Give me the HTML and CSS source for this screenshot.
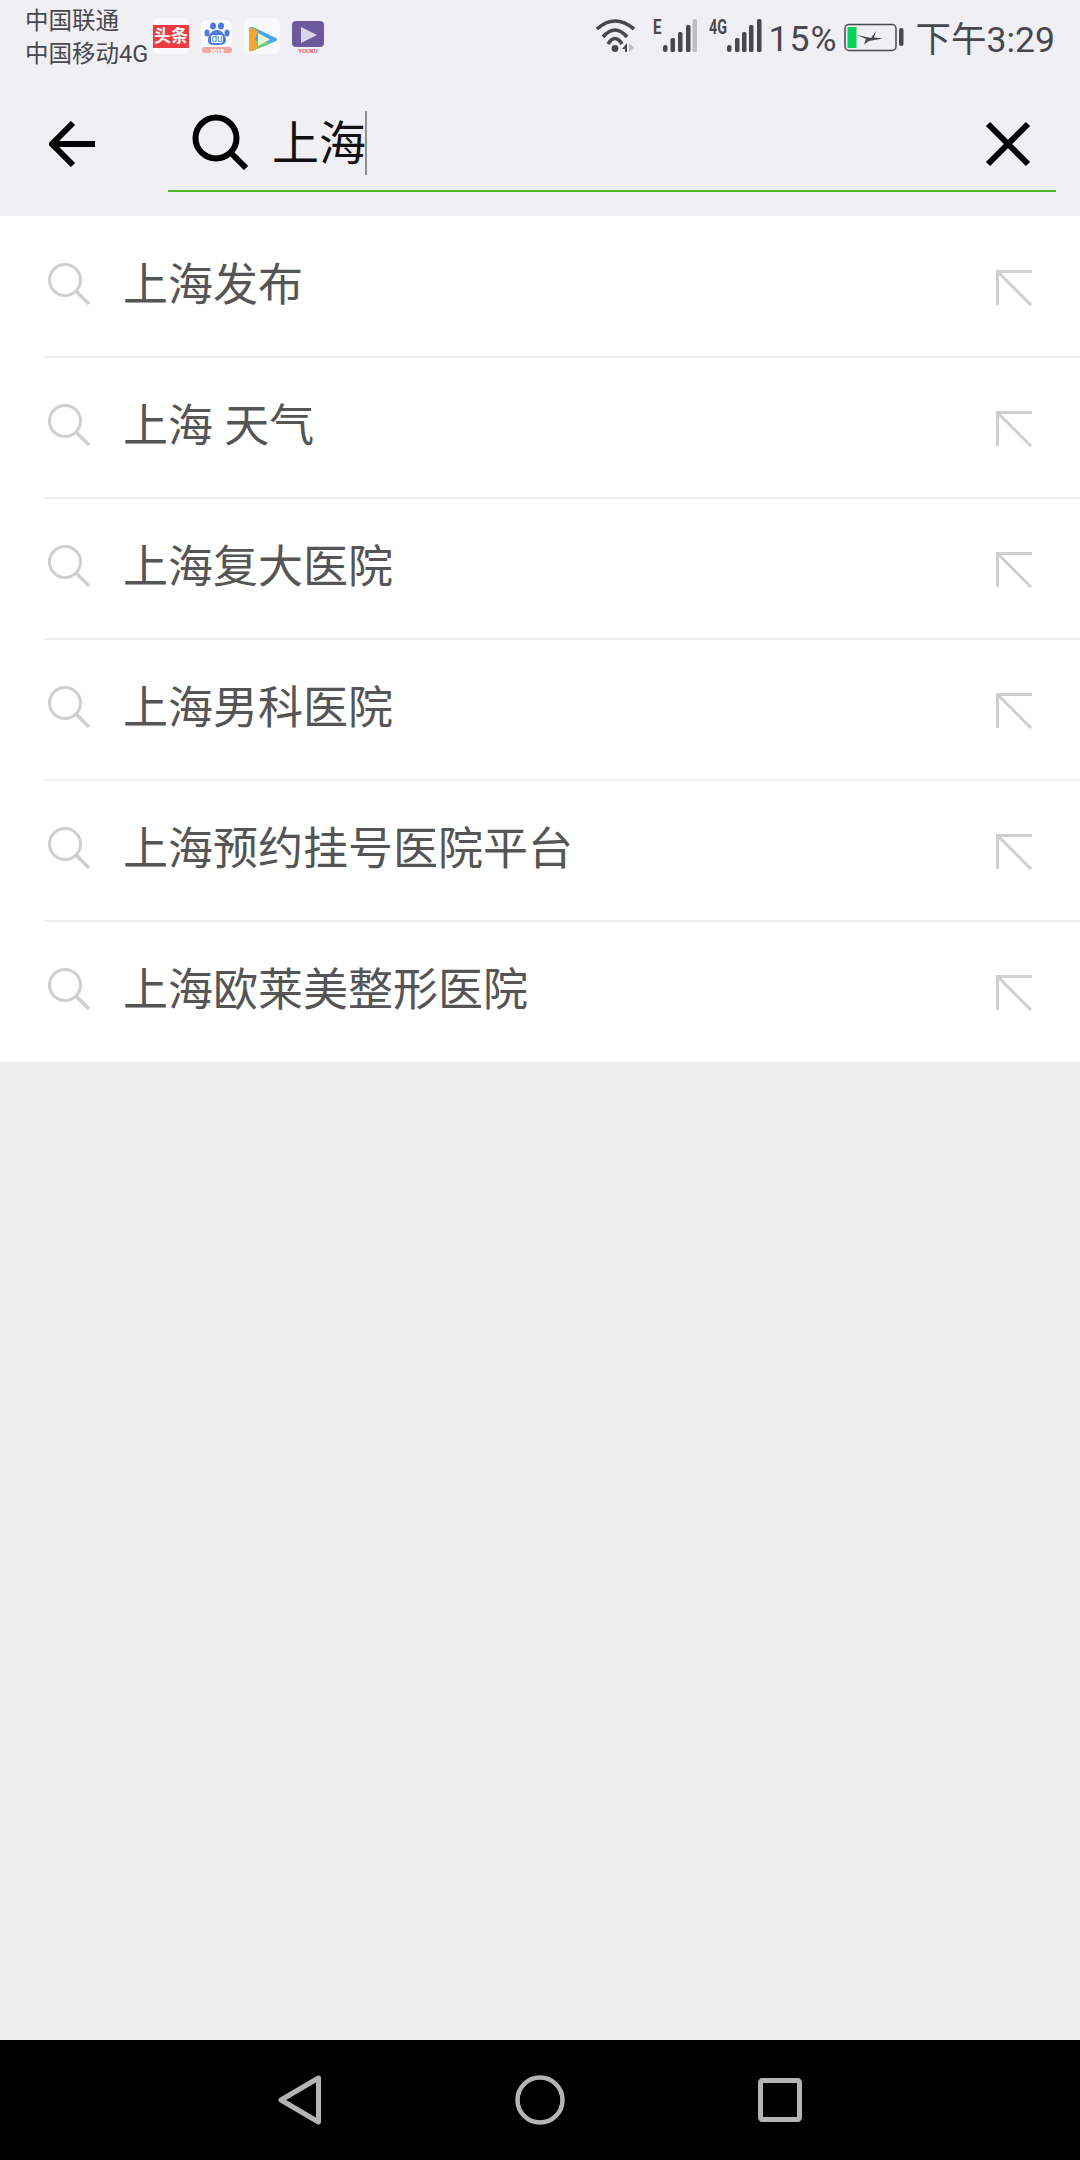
FILE: index.html
```html
<!DOCTYPE html>
<html lang="en">
<head>
    <meta charset="UTF-8">
    <title>搜索</title>
    <link rel="stylesheet" href="styles.css">
</head>
<body>
    <svg class="defs" width="0" height="0">
        <symbol id="glass" viewBox="0 0 44 44">
            <circle cx="18" cy="18" r="15.5" fill="none" stroke="#cfcfcf" stroke-width="3"/>
            <path d="M29.5 29.5L42 42" stroke="#cfcfcf" stroke-width="3.5" fill="none"/>
        </symbol>
        <symbol id="fill-arrow" viewBox="0 0 36 36">
            <path d="M1.5 35V1.5H36M1.5 1.5L35 35" stroke="#cfcfcf" stroke-width="3" fill="none"/>
        </symbol>
    </svg>

    <div class="status">
        <div class="carrier">
            <div>中国联通</div>
            <div>中国移动4G</div>
        </div>
        <div class="apps">
            <div class="app toutiao"><span>头条</span></div>
            <svg class="app baidu" width="33" height="34" viewBox="0 0 33 34">
                <rect x="1" width="31" height="30" rx="6" fill="#fbfbfd"/>
                <ellipse cx="7" cy="13" rx="2.500" ry="3.500" fill="#4d7be0"/>
                <ellipse cx="13" cy="6" rx="3" ry="3.500" fill="#4d7be0"/>
                <ellipse cx="21" cy="6" rx="3" ry="3.500" fill="#4d7be0"/>
                <ellipse cx="27" cy="13" rx="2.500" ry="3.500" fill="#4d7be0"/>
                <path d="M17 10c5 0 9 6 9 10s-3 5-9 5-9 0-9-5 4-10 9-10z" fill="#4d7be0"/>
                <rect x="11" y="15" width="12" height="8" rx="2" fill="#fff"/>
                <text x="17" y="22" class="baidu-du">du</text>
                <rect x="2" y="27" width="30" height="6" rx="3" fill="#f0a8a0"/>
                <text x="17" y="32.500" class="baidu-year">2018</text>
            </svg>
            <svg class="app" width="36" height="36" viewBox="0 0 36 36">
                <rect width="36" height="36" rx="6" fill="#f9f9fc"/>
                <path d="M7 9Q5 9 5 12V31Q5 34 8 33L32 23Q34 21.500 32 20L9 9z" fill="#45a8ea"/>
                <path d="M11 22L27 25 8 33Q5 34 5 31V25z" fill="#6fce6a"/>
                <path d="M5 12Q5 9 8 9.500L14 13 11 22 14 30 8 33Q5 34 5 31z" fill="#f7a62b"/>
                <path d="M14 15L26 21.500 14 28z" fill="#eaf7d8"/>
            </svg>
            <svg class="app youku" width="32" height="33" viewBox="0 0 32 33">
                <rect width="32" height="26" rx="4" fill="#6c5a9c"/>
                <path d="M9 6L25 14 9 22z" fill="#d9d5e8"/>
                <text x="16" y="32" class="youku-name">YOUKU</text>
            </svg>
        </div>
        <div class="sys">
            <svg class="wifi" width="40" height="34" viewBox="0 0 40 34">
                <path d="M1 10Q19 -6 38 10M7 18Q19 4 31 18M12 25Q19 14 26 25" fill="none" stroke="#47474d" stroke-width="3.600"/>
                <circle cx="19" cy="29.500" r="3.400" fill="#47474d"/>
                <path d="M31 24v9h-2v-3h-3z" fill="#47474d"/>
                <path d="M33 24l5 4.500-5 4.500z" fill="#bdbdc2"/>
            </svg>
            <svg class="sig-e" width="46" height="50" viewBox="0 -8 46 50">
                <text x="0" y="14.500" class="sig-label" textLength="8.500" lengthAdjust="spacingAndGlyphs">E</text>
                <rect x="10" y="26" width="4.500" height="7" rx="2.200" fill="#47474d"/>
                <rect x="17.500" y="19" width="4.500" height="14" rx="1.500" fill="#47474d"/>
                <rect x="25" y="13" width="4.500" height="20" rx="1.500" fill="#47474d"/>
                <rect x="33" y="6" width="4.500" height="27" rx="1.500" fill="#47474d"/>
                <rect x="39.500" y="0" width="4.500" height="33" rx="1.500" fill="#bdbdc2"/>
            </svg>
            <svg class="sig-4g" width="54" height="50" viewBox="0 -8 54 50">
                <text x="0" y="14.500" class="sig-label" textLength="18" lengthAdjust="spacingAndGlyphs">4G</text>
                <rect x="18" y="26" width="4.500" height="7" rx="2.200" fill="#47474d"/>
                <rect x="26" y="19" width="4.500" height="14" rx="1.500" fill="#47474d"/>
                <rect x="33" y="13" width="4.500" height="20" rx="1.500" fill="#47474d"/>
                <rect x="40" y="6" width="4.500" height="27" rx="1.500" fill="#47474d"/>
                <rect x="48" y="0" width="4.500" height="33" rx="1.500" fill="#47474d"/>
            </svg>
            <span class="pct">15%</span>
            <svg class="batt" width="60" height="30" viewBox="0 0 60 30">
                <rect x="1" y="1.500" width="51" height="26" rx="4" fill="none" stroke="#47474d" stroke-width="1.500"/>
                <rect x="3.500" y="4" width="9" height="21" fill="#08d15b"/>
                <path d="M13 12L27 15 32 8 30 14.500 39 15.500 25 18 20 21.500 22 16z" fill="#47474d"/>
                <rect x="55" y="5" width="4.500" height="18" rx="2" fill="#47474d"/>
            </svg>
            <span class="clock">下午3:29</span>
        </div>
    </div>

    <div class="searchbar">
        <svg class="back" width="48" height="48" viewBox="0 0 48 48">
            <path d="M46 24H4M24 3L3 24 24 45" fill="none" stroke="#000" stroke-width="6"/>
        </svg>
        <div class="field">
            <svg class="field-glass" width="56" height="56" viewBox="0 0 56 56">
                <circle cx="24" cy="24" r="20.500" fill="none" stroke="#000" stroke-width="6"/>
                <path d="M38 38L54 54" stroke="#000" stroke-width="6" fill="none"/>
            </svg>
            <span class="query">上海</span>
            <span class="cursor"></span>
            <svg class="clear" width="46" height="46" viewBox="0 0 46 46">
                <path d="M3 3L43 43M43 3L3 43" stroke="#000" stroke-width="6" fill="none"/>
            </svg>
        </div>
    </div>

    <ul class="list">
        <li><svg class="ico-glass"><use href="#glass"/></svg><span class="txt">上海发布</span><svg class="ico-fill"><use href="#fill-arrow"/></svg></li>
        <li><svg class="ico-glass"><use href="#glass"/></svg><span class="txt">上海 天气</span><svg class="ico-fill"><use href="#fill-arrow"/></svg></li>
        <li><svg class="ico-glass"><use href="#glass"/></svg><span class="txt">上海复大医院</span><svg class="ico-fill"><use href="#fill-arrow"/></svg></li>
        <li><svg class="ico-glass"><use href="#glass"/></svg><span class="txt">上海男科医院</span><svg class="ico-fill"><use href="#fill-arrow"/></svg></li>
        <li><svg class="ico-glass"><use href="#glass"/></svg><span class="txt">上海预约挂号医院平台</span><svg class="ico-fill"><use href="#fill-arrow"/></svg></li>
        <li><svg class="ico-glass"><use href="#glass"/></svg><span class="txt">上海欧莱美整形医院</span><svg class="ico-fill"><use href="#fill-arrow"/></svg></li>
    </ul>

    <div class="spacer"></div>

    <div class="navbar">
        <svg width="44" height="50" viewBox="0 0 44 50">
            <path d="M40.500 3L3 25 40.500 47z" fill="none" stroke="#b4b4b4" stroke-width="5" stroke-linejoin="round"/>
        </svg>
        <svg width="50" height="50" viewBox="0 0 50 50">
            <circle cx="25" cy="25" r="22.500" fill="none" stroke="#b4b4b4" stroke-width="4.500"/>
        </svg>
        <svg width="44" height="44" viewBox="0 0 44 44">
            <rect x="2.500" y="2.500" width="39" height="39" rx="2" fill="none" stroke="#b4b4b4" stroke-width="5"/>
        </svg>
    </div>
</body>
</html>
```

FILE: styles.css
```css
html, body {
    margin: 0;
    height: 100%;
}

body {
    display: flex;
    flex-direction: column;
    height: 2160px;
    background-color: #ededee;
    font-family: "Roboto", "Noto Sans CJK SC", sans-serif;
}

.defs {
    display: none;
}

.status {
    display: flex;
    align-items: center;
    height: 72px;
    padding: 0 25px 0 25px;
    background-color: #efeff4;
    color: #47474d;
}

.carrier {
    width: 128px;
    font-size: 23.5px;
    line-height: 33px;
    margin-top: 4px;
    white-space: nowrap;
}

.apps {
    display: flex;
    align-items: flex-start;
    gap: 11px;
}

.app {
    flex-shrink: 0;
}

.baidu {
    margin-top: 2px;
}

.baidu-du {
    font-family: "Roboto", sans-serif;
    font-size: 10px;
    text-anchor: middle;
    fill: #4d7be0;
}

.baidu-year {
    font-family: "Roboto", sans-serif;
    font-size: 6px;
    font-weight: 700;
    text-anchor: middle;
    fill: #fff;
}

.youku {
    margin: 3px 0 0 1px;
}

.youku-name {
    font-family: "Roboto", sans-serif;
    font-size: 6px;
    font-weight: 700;
    text-anchor: middle;
    fill: #d9648a;
}

.toutiao {
    width: 36px;
    height: 36px;
    display: flex;
    align-items: center;
    border-radius: 6px;
    background-color: #f9f9fc;
}

.toutiao span {
    display: block;
    width: 36px;
    height: 23px;
    background-color: #ee3b42;
    color: #fff;
    font-size: 17px;
    font-weight: 700;
    line-height: 23px;
    text-align: center;
}

.sys {
    display: flex;
    align-items: center;
    margin-left: auto;
}

.wifi {
    margin-right: 17px;
}

.sig-e {
    margin-right: 10px;
}

.sig-label {
    font-family: "Roboto", sans-serif;
    font-size: 20px;
    font-weight: 700;
    fill: #47474d;
}

.pct {
    width: 75px;
    margin: 5px 0 0 6px;
    font-size: 35.5px;
    letter-spacing: 1px;
}

.batt {
    margin: 4px 12px 0 0;
}

.clock {
    font-size: 35.5px;
}

.searchbar {
    display: flex;
    height: 144px;
    background-color: #efeff4;
}

.back {
    margin: 48px 0 0 49px;
}

.field {
    display: flex;
    align-items: flex-start;
    box-sizing: border-box;
    width: 888px;
    height: 120px;
    margin-left: 71px;
    border-bottom: 2px solid #4cb82c;
}

.field-glass {
    margin: 42px 0 0 24px;
}

.query {
    margin: 38px -1px 0 24px;
    color: #111;
    font-size: 47px;
    line-height: 68px;
}

.cursor {
    width: 2px;
    height: 64px;
    margin-top: 39px;
    background-color: #8f8f8f;
}

.clear {
    margin: 49px 25px 0 auto;
}

.list {
    list-style: none;
    margin: 0;
    padding: 0;
    background-color: #fff;
}

.list li {
    display: flex;
    align-items: center;
    position: relative;
    height: 141px;
    padding-left: 47px;
    box-sizing: border-box;
}

.list li:not(:last-child)::after {
    content: "";
    position: absolute;
    left: 44px;
    right: 0;
    bottom: -1px;
    height: 2px;
    background-color: #eeeeee;
}

.ico-glass {
    width: 44px;
    height: 44px;
    flex-shrink: 0;
    margin-top: -5px;
}

.txt {
    margin: -10px 0 0 32px;
    color: #555;
    font-size: 45px;
}

.ico-fill {
    width: 36px;
    height: 36px;
    margin: 2px 48px 0 auto;
}

.spacer {
    flex: 1;
}

.navbar {
    display: flex;
    align-items: center;
    justify-content: center;
    gap: 193px;
    height: 120px;
    background-color: #000;
}
```
